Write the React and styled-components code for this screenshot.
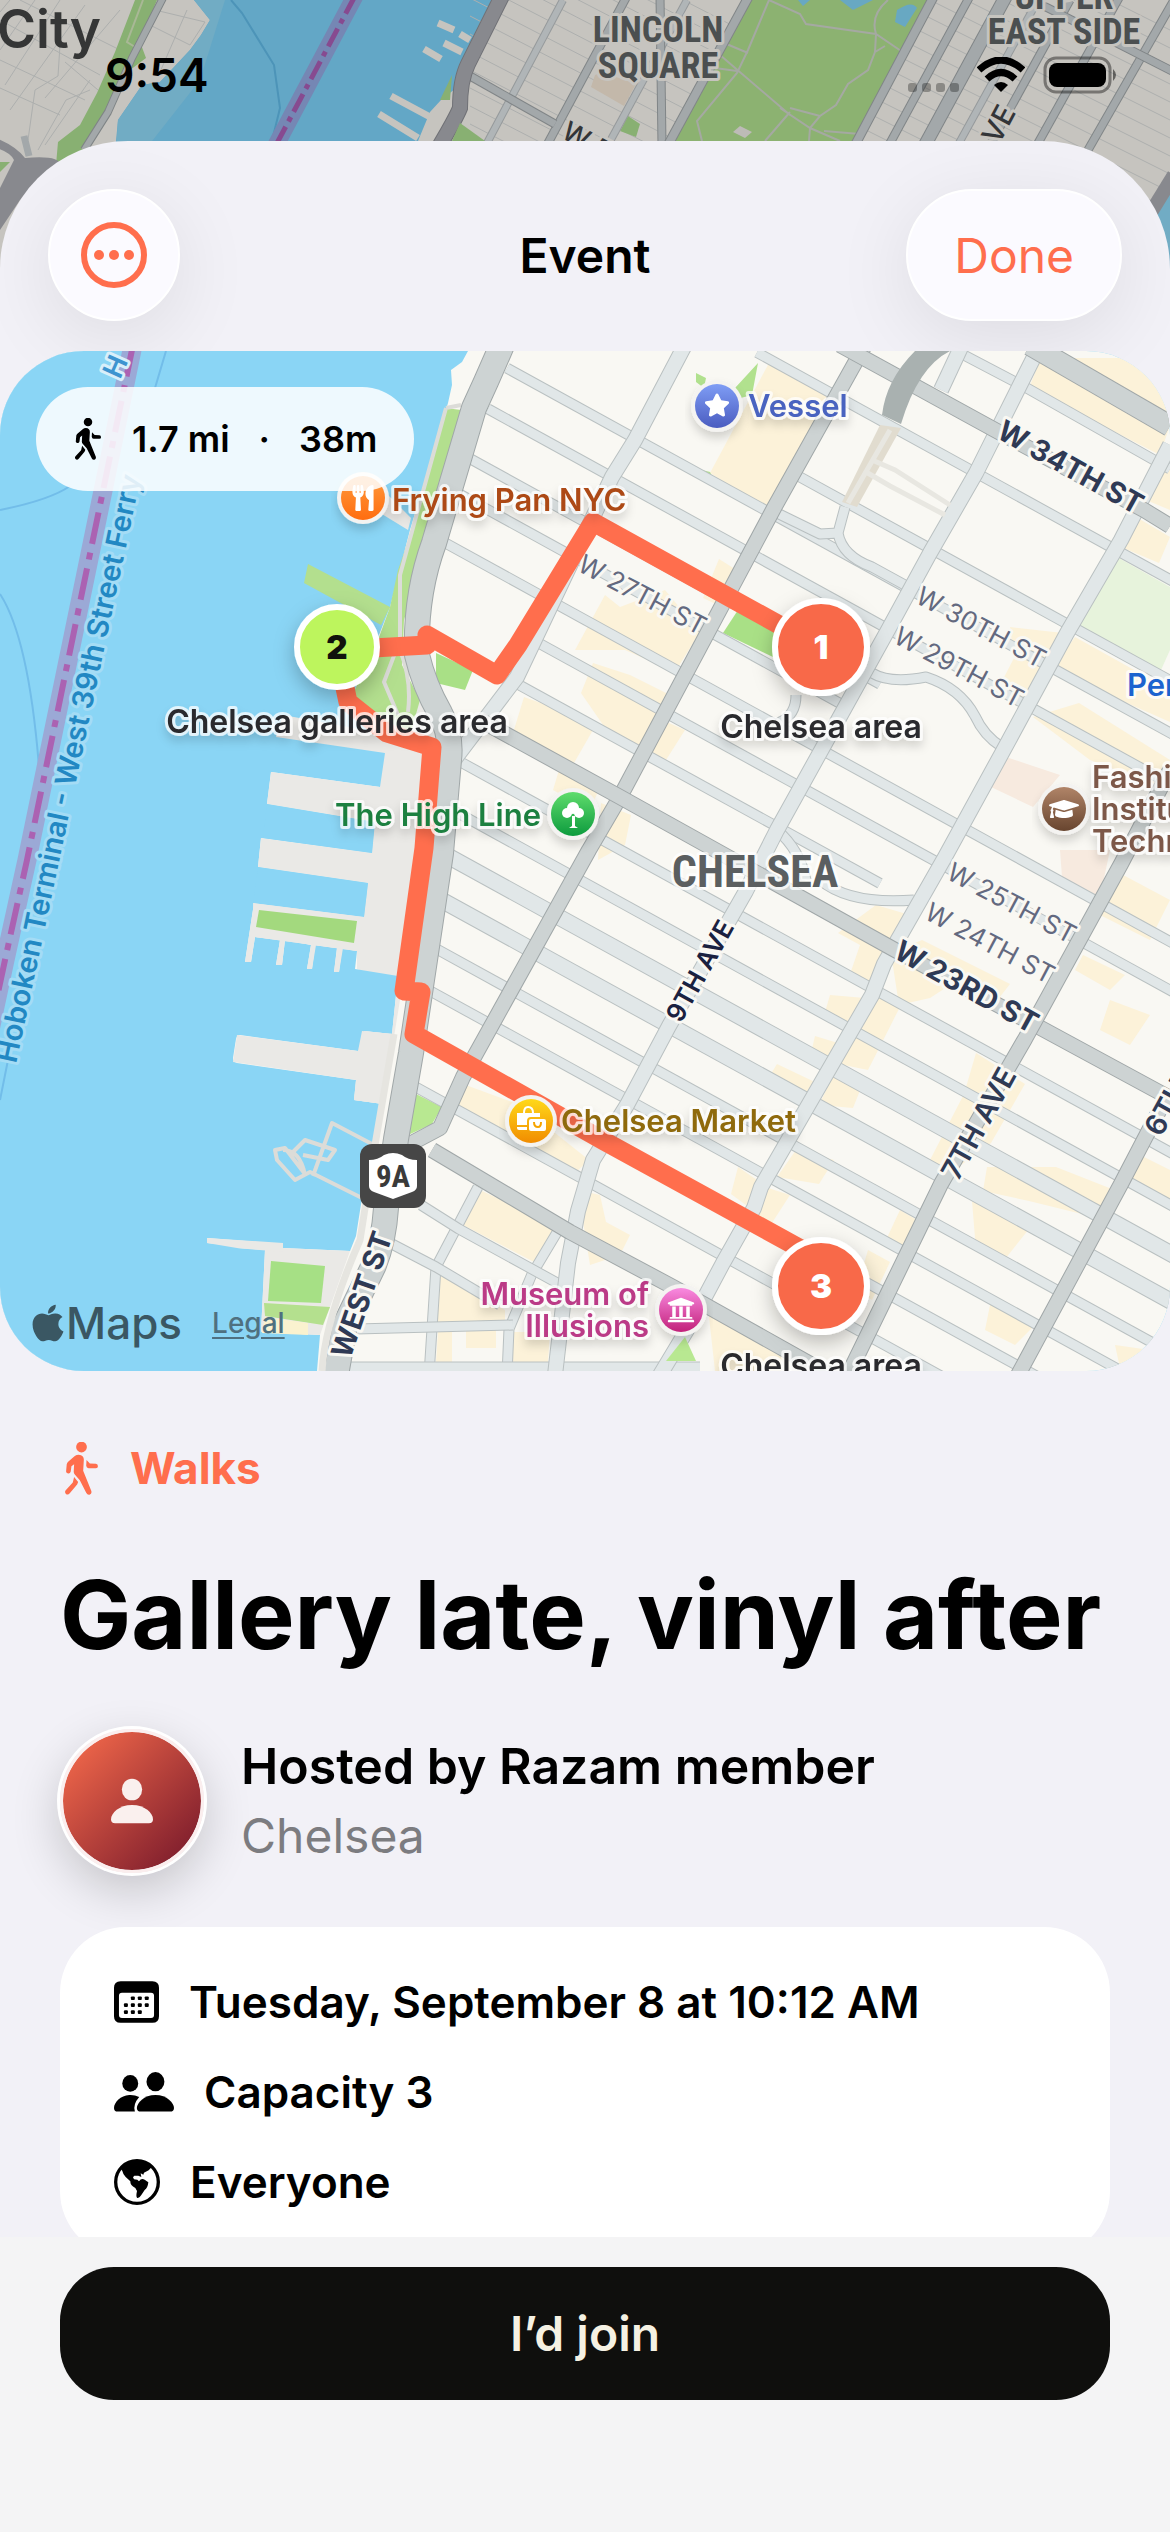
import React from 'react';
import styled, { createGlobalStyle } from 'styled-components';
import { FaApple, FaGraduationCap, FaStar, FaUniversity, FaUtensils } from 'react-icons/fa';

const CORAL = '#ff6e4d';

const GlobalStyle = createGlobalStyle`
  * {
    box-sizing: border-box;
  }
  body {
    margin: 0;
    background: #f2f1f7;
    color: #000;
    font-family: Inter, "Liberation Sans", sans-serif;
  }
  h1, h2, p, ul {
    margin: 0;
    padding: 0;
  }
  button {
    font-family: inherit;
    border: none;
    cursor: pointer;
  }
`;

const Screen = styled.div`
  position: relative;
  display: flex;
  flex-direction: column;
  height: 100vh;
  overflow: hidden;
`;

const Backdrop = styled.svg`
  position: absolute;
  top: 0;
  left: 0;
  width: 100%;
  height: 300px;
`;

const StatusBar = styled.div`
  position: relative;
  flex: none;
  display: flex;
  justify-content: space-between;
  align-items: center;
  height: 141px;
  padding: 8px 52px 0 105px;
`;

const Clock = styled.span`
  font-size: 46px;
  font-weight: 600;
`;

const StatusIcons = styled.div`
  display: flex;
  align-items: center;
  gap: 18px;
`;

const Sheet = styled.main`
  position: relative;
  flex: 1;
  min-height: 0;
  display: flex;
  flex-direction: column;
  border-radius: 128px 128px 0 0;
  background: #f2f1f7;
  overflow: hidden;
`;

const Header = styled.header`
  flex: none;
  display: grid;
  grid-template-columns: 1fr auto 1fr;
  align-items: center;
  padding: 48px 48px 30px;
`;

const HeaderTitle = styled.h2`
  font-size: 48px;
  font-weight: 600;
`;

const GlassButton = styled.button`
  display: flex;
  align-items: center;
  justify-content: center;
  justify-self: ${(props) => props.$side};
  height: 132px;
  min-width: 132px;
  padding: 0 ${(props) => (props.$side === 'end' ? 46 : 0)}px;
  border-radius: 66px;
  border: 2px solid #fff;
  background: #fbfaff;
  box-shadow: 0 16px 80px rgba(0, 0, 0, 0.09);
  color: ${CORAL};
  font-size: 48px;
`;

const Content = styled.div`
  flex: 1;
  min-height: 0;
  overflow-y: auto;
  scrollbar-width: none;
`;

const MapCard = styled.section`
  position: relative;
  height: 1020px;
  border-radius: 84px;
  overflow: hidden;
  background: #8ad5f5;
`;

const MapCanvas = styled.svg`
  display: block;
  width: 100%;
  height: 100%;
  font-family: Inter, "Liberation Sans", sans-serif;
`;

const Chip = styled.div`
  position: absolute;
  top: 36px;
  left: 36px;
  display: flex;
  align-items: center;
  gap: 29px;
  height: 104px;
  padding: 0 37px;
  border-radius: 52px;
  background: rgba(255, 255, 255, 0.86);
  font-size: 36px;
  font-weight: 600;
`;

const Attribution = styled.div`
  position: absolute;
  left: 32px;
  bottom: 22px;
  display: flex;
  align-items: center;
  color: #3a5763;
  font-size: 44px;
  font-weight: 500;
  line-height: 52px;

  svg {
    width: 32px;
    height: 42px;
    margin-right: 2px;
  }

  a {
    margin-left: 30px;
    color: #4f7080;
    font-size: 28px;
    text-underline-offset: 4px;
  }
`;

const Details = styled.section`
  display: flex;
  flex-direction: column;
  padding: 67px 60px 90px;
`;

const Category = styled.div`
  display: flex;
  align-items: center;
  gap: 32px;
  height: 60px;
  padding-left: 5px;
  color: ${CORAL};
  font-size: 44px;
  font-weight: 700;
`;

const Title = styled.h1`
  margin-top: 57px;
  font-size: 95px;
  font-weight: 700;
  line-height: 120px;
  white-space: nowrap;
`;

const Host = styled.div`
  display: flex;
  align-items: center;
  gap: 37px;
  margin-top: 54px;
  padding-right: 60px;
`;

const Avatar = styled.div`
  flex: none;
  display: flex;
  align-items: center;
  justify-content: center;
  width: 144px;
  height: 144px;
  border: 3px solid #fbeeee;
  border-radius: 50%;
  background: linear-gradient(135deg, #f0674a 8%, #7c1c2c 92%) padding-box;
  box-shadow: 0 0 0 3px #fff, 0 16px 50px rgba(0, 0, 0, 0.2);
`;

const HostName = styled.p`
  font-size: 50px;
  font-weight: 600;
  line-height: 70px;
`;

const HostArea = styled.p`
  color: #7c7c80;
  font-size: 48px;
  line-height: 70px;
`;

const InfoCard = styled.ul`
  margin-top: 54px;
  padding: 30px 54px;
  border-radius: 66px;
  background: #fff;
  list-style: none;
`;

const InfoRow = styled.li`
  display: flex;
  align-items: center;
  gap: 30px;
  height: 90px;
  font-size: 44px;
  font-weight: 600;
`;

const Footer = styled.footer`
  flex: none;
  height: 295px;
  padding: 30px 60px;
  background: #f4f4f5;
`;

const JoinButton = styled.button`
  width: 100%;
  height: 133px;
  border-radius: 54px;
  background: #0f0f0d;
  color: #f5f1e3;
  font-size: 48px;
  font-weight: 600;
`;

const MapText = styled.text`
  fill: ${(props) => props.$color || '#2b2b2d'};
  font-size: ${(props) => props.$size || 31}px;
  font-weight: ${(props) => props.$weight || 600};
  font-family: ${(props) => (props.$narrow ? '"Liberation Sans Narrow", "Roboto Condensed", "Liberation Sans", sans-serif' : 'inherit')};
  text-anchor: ${(props) => props.$anchor || 'start'};
  paint-order: stroke;
  stroke: ${(props) => props.$halo || 'rgba(255, 255, 255, 0.75)'};
  stroke-width: 6px;
  stroke-linejoin: round;
`;

// [x, y] where each cross street meets 10th Ave, and how far west it starts
const STREETS = [
  [838, 397, 757],
  [800, 477, 800],
  [774, 515, 507],
  [750, 553, 488],
  [727, 600, 470, 880],
  [712, 633, 455, 850],
  [689, 677, 444],
  [666, 713, 530],
  [643, 753, 510, 880],
  [597, 837, 462],
  [578, 879, 450],
  [555, 915, 446, 1175, 15],
  [536, 952, 440, 1175, 15],
  [513, 991, 433],
  [494, 1026, 428],
  [471, 1065, 418],
  [452, 1107, 412],
];

const SLOPE = 0.55;

const LIGHT_ROADS = [
  'M685 345L635 440L612 477L517 677L454 760',
  'M1040 345L976 473L930 553L888 630L777 830L746 891L669 1026L627 1105L593 1160L578 1211L568 1263L555 1375',
  'M1170 445L1121 540L1067 633L1002 753L945 857L884 964L872 995L761 1187L754 1208L723 1263L690 1325L660 1375',
  'M962 345L941 390',
];

const THIN_ROADS = [
  'M960 353L1025 387L1170 469',
  'M478 1187L436 1267L429 1375',
  'M559 1229L532 1274L509 1329L507 1375',
  'M421 1205L459 1229L570 1290',
  'M390 1243L436 1267L500 1305',
  'M356 1329L513 1325',
  'M345 1367L700 1367',
  'M845 507L838 533L820 534L777 513M838 533Q842 556 872 567L914 590',
  'M872 673Q890 684 926 677Q960 688 975 716Q984 736 1002 747',
  'M777 830Q800 850 806 880M820 880Q850 905 914 900',
  'M796 695Q796 715 780 722L773 738',
];

const MAJOR_ROADS = [
  'M865 345L774 508L620 797L589 850L463 1077L440 1128L408 1145',
  'M480 720L620 797L895 950L1037 1026L1170 1098',
  'M432 1150L570 1232L673 1287L830 1375',
  'M1170 770L1121 864L1025 1039L941 1184L848 1375',
  'M1170 1090L1121 1184L1018 1375',
  'M840 345L995 430L1144 510L1170 526',
];

const WEST_ST = 'M502 345Q488 378 474 408L434 543Q415 595 417 655Q424 685 440 713Q452 735 449 760L441 853L411 1053L396 1139L386 1208Q384 1240 374 1265L345 1325L336 1375';

const BUILDINGS = [
  '769,363 834,397 769,510 710,473',
  '1029,388 1041,358 1160,358 1170,425 1160,455',
  '1160,470 1170,470 1170,510 1146,500',
  '1136,517 1170,537 1159,563 1121,547',
  '1010,627 1063,633 1022,707 999,687 1014,658',
  '1075,637 1170,690 1170,722 1052,670',
  '1033,717 1079,703 1170,760 1170,790 1090,760',
  '575,650 605,595 620,607 665,590 700,632 675,672 625,650',
  '719,559 738,571 720,606 703,598',
  '581,693 593,663 630,675 670,695 640,750 610,735',
  '524,697 597,723 574,763 513,733',
  '559,770 600,787 590,810 553,790',
  '662,720 685,730 666,760 645,750',
  '601,803 631,815 625,845 598,860',
  '876,905 910,915 888,947 876,988 849,977 860,945 838,933',
  '891,953 922,940 1010,984 999,998 950,985 930,998 899,1005',
  '830,995 865,998 845,1029 823,1019',
  '815,1036 838,1043 830,1060 811,1053',
  '777,1064 819,1084 807,1101 769,1077',
  '880,995 903,1001 868,1070 834,1063',
  '834,1074 861,1088 853,1108 819,1105',
  '796,1150 834,1160 819,1184 777,1177',
  '738,1167 757,1180 750,1208 731,1194',
  '765,1187 790,1195 770,1226 752,1218',
  '976,1053 1025,1084 991,1143 945,1177 930,1160 964,1094',
  '987,1167 1056,1167 1117,1191 1098,1218 1029,1201 983,1191',
  '972,1201 1029,1229 1002,1263 976,1250',
  '1110,868 1170,900 1150,940 1100,915',
  '1083,955 1125,975 1110,990 1075,970',
  '1110,1000 1150,1015 1130,1045 1100,1030',
  '1136,1153 1170,1170 1170,1200 1125,1180',
  '991,1300 1035,1325 1015,1345 985,1330',
  '1115,1345 1150,1350 1120,1368',
  '900,1210 920,1222 900,1255 886,1240',
  '868,1250 890,1262 872,1300 856,1290',
  '708,1308 790,1355 790,1371 715,1371',
  '578,1190 600,1195 606,1222 630,1235 620,1255 590,1265',
  '463,1084 520,1105 589,1160 574,1174 455,1105',
  '482,1191 555,1225 536,1263 463,1225',
  '440,1273 505,1310 505,1322 436,1322',
  '438,1332 452,1332 452,1362 436,1362',
  '466,1330 496,1330 496,1348 466,1348',
  '513,1332 550,1332 548,1362 513,1362',
];

const WATER = 'M0 351H468L462 362L451 370L452 385L448 403L410 530L390 607L377 640L350 700L385 753L380 787L271 772L267 804L375 822L372 853L261 838L258 867L368 883L364 917L254 903L245 962H251L255 937L280 940L276 965H282L285 940L311 945L307 969H312L315 945L337 948L334 972H339L342 948L357 951L355 969L398 976L392 1034L364 1031L362 1047L358 1051L240 1035Q237 1035 236 1039L233 1058Q233 1062 237 1063L356 1080L354 1100L383 1104L375 1143L362 1198L356 1236L350 1251L283 1248V1244L207 1238V1243L237 1246V1248L265 1250L261 1332L320 1335L317 1371H0Z';

const ROUTE = 'M821 648L593 522L518 645L497 675L427 635V645L337 650L348 702L387 733L432 747L424 848L404 991L421 992L414 1034L604 1141L821 1260';

const POI_COLORS = {
  food: ['#ff9a3c', '#ff6d10'],
  sight: ['#7f9df5', '#4a5cc0'],
  park: ['#5fdc6c', '#0d9b3e'],
  shop: ['#ffd91a', '#f18c00'],
  museum: ['#f98ae0', '#c2217a'],
  school: ['#b08468', '#68452f'],
};

const POIS = [
  { kind: 'food', x: 363, y: 498, tx: 392, ty: 511, lines: ['Frying Pan NYC'], color: '#ad4a13' },
  { kind: 'sight', x: 717, y: 406, tx: 748, ty: 417, lines: ['Vessel'], color: '#4a63c0' },
  { kind: 'park', x: 573, y: 814, tx: 541, ty: 826, anchor: 'end', lines: ['The High Line'], color: '#1d8040' },
  { kind: 'shop', x: 531, y: 1121, tx: 561, ty: 1132, lines: ['Chelsea Market'], color: '#8f6a0c' },
  { kind: 'museum', x: 681, y: 1310, tx: 649, ty: 1305, anchor: 'end', lines: ['Museum of', 'Illusions'], color: '#bb3a87' },
  { kind: 'school', x: 1064, y: 809, tx: 1092, ty: 788, lines: ['Fashion', 'Institute of', 'Technology'], color: '#7d5949' },
];

const STREET_LABELS = [
  { text: 'W 34TH ST', x: 995, y: 437, angle: 29, size: 29, weight: 700, color: '#2f3a55' },
  { text: 'W 23RD ST', x: 892, y: 957, angle: 29, size: 29, weight: 700, color: '#2f3a55' },
  { text: 'W 27TH ST', x: 576, y: 570, angle: 28, size: 26, weight: 400, color: '#63697f' },
  { text: 'W 30TH ST', x: 914, y: 602, angle: 28, size: 26, weight: 400, color: '#63697f' },
  { text: 'W 29TH ST', x: 892, y: 642, angle: 28, size: 26, weight: 400, color: '#63697f' },
  { text: 'W 25TH ST', x: 945, y: 878, angle: 28, size: 26, weight: 400, color: '#63697f' },
  { text: 'W 24TH ST', x: 923, y: 918, angle: 28, size: 26, weight: 400, color: '#63697f' },
  { text: '9TH AVE', x: 681, y: 1024, angle: -61, size: 26, weight: 600, color: '#1a2140' },
  { text: '7TH AVE', x: 958, y: 1182, angle: -61, size: 29, weight: 600, color: '#2f3a55' },
  { text: '6TH AVE', x: 1161, y: 1138, angle: -61, size: 29, weight: 600, color: '#2f3a55' },
  { text: 'WEST ST', x: 350, y: 1360, angle: -71, size: 29, weight: 700, color: '#2f3a55' },
];

const STOPS = [
  { n: 1, x: 821, y: 647, r: 46, label: 'Chelsea area', ly: 738, fill: '#f8694a', ink: '#fff' },
  { n: 2, x: 337, y: 647, r: 40, label: 'Chelsea galleries area', ly: 733, fill: '#bdf55d', ink: '#11130c' },
  { n: 3, x: 821, y: 1286, r: 46, label: 'Chelsea area', ly: 1377, fill: '#f8694a', ink: '#fff' },
];

const WalkIcon = ({ width, height }) => (
  <svg width={width} height={height} viewBox="0 0 98 158" fill="currentColor" aria-hidden="true">
    <circle cx="49" cy="15" r="16" />
    <path d="M3 88L5 66Q6 61 10 58L29 42Q34 38 41 38Q56 39 56 53L54 86L78 145Q81 154 73 157Q67 159 63 151L44 114L29 97Q25 92 26 86L27 66L19 72L17 88Q15 95 9 94Q3 93 3 88Z" />
    <path d="M27 104L39 119L36 127L14 153Q8 160 2 154Q-2 149 2 144L23 121Z" />
    <path d="M64 54L74 64L92 65Q98 66 98 72Q98 78 92 78L70 78Q64 78 63 71Z" />
  </svg>
);

const WifiIcon = () => (
  <svg width="48" height="36" viewBox="0 0 48 36" aria-hidden="true">
    <path d="M24 35L17 28Q24 22 31 28Z" fill="#000" />
    <path d="M10 22Q24 9 38 22" fill="none" stroke="#000" strokeWidth="7" />
    <path d="M2 13Q24 -7 46 13" fill="none" stroke="#000" strokeWidth="7" />
  </svg>
);

const BatteryIcon = () => (
  <svg width="75" height="38" viewBox="0 0 75 38" aria-hidden="true">
    <rect x="2" y="2" width="65" height="34" rx="11" fill="none" stroke="#000" strokeOpacity="0.4" strokeWidth="3" />
    <rect x="6" y="7" width="57" height="24" rx="8" />
    <path d="M70 13Q76 19 70 25Z" fillOpacity="0.5" />
  </svg>
);

const SignalDots = () => (
  <svg width="52" height="38" viewBox="0 0 52 38" aria-hidden="true">
    {[1, 15, 29, 43].map((x) => (
      <rect key={x} x={x} y="27" width="9" height="9" rx="3" fill="#000" fillOpacity="0.3" />
    ))}
  </svg>
);

const MoreIcon = () => (
  <svg width="66" height="66" viewBox="0 0 66 66" fill={CORAL} aria-hidden="true">
    <circle cx="33" cy="33" r="30" fill="none" stroke={CORAL} strokeWidth="6" />
    <circle cx="18" cy="33" r="5" />
    <circle cx="33" cy="33" r="5" />
    <circle cx="48" cy="33" r="5" />
  </svg>
);

const PersonIcon = () => (
  <svg width="42" height="46" viewBox="0 0 124 132" fill="#faf0ee" aria-hidden="true">
    <ellipse cx="62" cy="32" rx="30" ry="32" />
    <path d="M0 120C0 102 24 78 62 78S124 102 124 120Q124 132 112 132H12Q0 132 0 120Z" />
  </svg>
);

const CalendarIcon = () => (
  <svg width="45" height="42" viewBox="0 0 136 126" aria-hidden="true">
    <path fillRule="evenodd" d="M20 0H116Q136 0 136 20V106Q136 126 116 126H20Q0 126 0 106V20Q0 0 20 0ZM24 35Q15 35 15 44V102Q15 111 24 111H112Q121 111 121 102V44Q121 35 112 35Z" />
    {[[57, 51], [78, 51], [99, 51], [36, 72], [57, 72], [78, 72], [99, 72], [36, 93], [57, 93], [78, 93]].map(([x, y]) => (
      <rect key={`${x}-${y}`} x={x - 6} y={y - 5} width="12" height="11" rx="3" />
    ))}
  </svg>
);

const PeopleIcon = () => (
  <svg width="60" height="40" viewBox="0 0 181 120" aria-hidden="true">
    <ellipse cx="49" cy="34" rx="24" ry="25" />
    <ellipse cx="125" cy="29" rx="27" ry="29" />
    <path d="M76 75Q62 68 46 69C20 70 0 92 0 108Q0 119 11 119H63Q56 98 76 75Z" />
    <path d="M69 108C69 94 90 69 125 69S181 94 181 108Q181 119 169 119H81Q69 119 69 108Z" />
  </svg>
);

const GlobeIcon = () => (
  <svg width="46" height="46" viewBox="0 0 138 138" aria-hidden="true">
    <circle cx="69" cy="69" r="64" fill="none" stroke="#000" strokeWidth="10" />
    <path d="M20 28Q42 4 69 4Q96 4 114 23L104 34L90 41L88 47L80 43L82 54L73 50L61 50L57 55L60 61L70 62L75 67Q82 56 92 62L103 70Q101 88 92 93L82 108Q75 119 70 117Q65 114 69 96L64 87Q48 79 49 67L35 54Q27 46 25 36Z" />
  </svg>
);

const PoiGlyph = ({ kind }) => {
  switch (kind) {
    case 'food':
      return <FaUtensils x="-13" y="-13" size={26} color="#fff" />;
    case 'sight':
      return <FaStar x="-13" y="-14" size={26} color="#fff" />;
    case 'school':
      return <FaGraduationCap x="-15" y="-15" size={30} color="#fff" />;
    case 'museum':
      return <FaUniversity x="-14" y="-14" size={28} color="#fff" />;
    case 'park':
      return (
        <g fill="#fff">
          <circle cx="0" cy="-6" r="6" />
          <circle cx="-6" cy="-1" r="5" />
          <circle cx="6" cy="-1" r="5" />
          <path d="M-1 2H2V12L5 14H-4L-1 12Z" />
        </g>
      );
    default:
      return (
        <g fill="#fff">
          <path d="M-14 -8H9V-4H0Q-4 -4 -4 0V4H-14Z" />
          <path d="M-14 6H-4V9H-12Q-14 9 -14 7Z" />
          <path d="M-7 -8Q-7 -14 -3 -14Q2 -14 2 -8" fill="none" stroke="#fff" strokeWidth="2" />
          <rect x="-2" y="-2" width="17" height="12" rx="2" />
          <path d="M3 1Q3 6 7 6Q10 6 10 1" fill="none" stroke="#f7a400" strokeWidth="2" />
        </g>
      );
  }
};

const Road = ({ d, width, fill = '#e1e7e8', edge = '#b9c0c1' }) => (
  <>
    <path d={d} stroke={edge} strokeWidth={width + 2} fill="none" strokeLinejoin="round" />
    <path d={d} stroke={fill} strokeWidth={width} fill="none" strokeLinejoin="round" />
  </>
);

const streetPath = ([x, y, from, to = 1175]) => (
  `M${from} ${y + (from - x) * SLOPE}L${to} ${y + (to - x) * SLOPE}`
);

const RouteMap = () => (
  <MapCanvas viewBox="0 351 1170 1020" preserveAspectRatio="xMidYMid slice" role="img" aria-label="Walking route through Chelsea">
    <defs>
      {Object.entries(POI_COLORS).map(([kind, [top, bottom]]) => (
        <linearGradient key={kind} id={`poi-${kind}`} x1="0" y1="0" x2="0" y2="1">
          <stop offset="0" stopColor={top} />
          <stop offset="1" stopColor={bottom} />
        </linearGradient>
      ))}
      <filter id="soft" x="-50%" y="-50%" width="200%" height="200%">
        <feDropShadow dx="0" dy="8" stdDeviation="10" floodOpacity="0.25" />
      </filter>
      <filter id="label" x="-10%" y="-30%" width="120%" height="200%">
        <feDropShadow dx="0" dy="6" stdDeviation="5" floodOpacity="0.16" />
      </filter>
    </defs>

    <rect y="351" width="1170" height="1020" fill="#f9f8f3" />
    <g fill="#fcf2d9">
      {BUILDINGS.map((points) => <polygon key={points} points={points} />)}
    </g>
    <polygon points="1117,557 1170,587 1170,650 1161,670 1077,630" fill="#e7f3dc" />
    <polygon points="1006,757 1060,775 1033,807 991,787" fill="#f7eadf" />
    <polygon points="1060,850 1110,850 1100,897 1062,877" fill="#f7eadf" />
    <polygon points="723,633 738,610 784,627 773,657" fill="#a9e086" />
    <path d="M735 388L758 363L752 395L733 400ZM696 373L706 378L704 388L696 382ZM702 470L710 472L714 480L706 478Z" fill="#b1e18e" />
    <path d="M350 700L372 650L420 690L450 740L432 757L385 753L276 737L280 715Z" fill="#eae9e6" />
    <path d="M385 740L437 750L420 985H398L357 969L357 905L368 883L372 853Z" fill="#eae9e6" />
    <path d={WATER} fill="#8ad5f5" />
    <path d="M276 737L385 753L392 735L283 715Z" fill="#eae9e6" />
    <path d="M398 976L392 1034L364 1031L362 1047L354 1100L383 1104L400 1000Z" fill="#eae9e6" />
    <path d="M258 867L368 883L364 917L254 903L245 962H251L255 937L357 951L398 976L437 750L380 787L271 772L267 804L375 822L372 853L261 838Z" fill="#eae9e6" />
    <path d="M233 1062L237 1035L358 1051L362 1031L392 1034L383 1104L354 1100L356 1080Z" fill="#eae9e6" />
    <path d="M265 1250L283 1248L350 1251L320 1335L261 1332Z" fill="#eae9e6" />
    <path d="M207 1238L283 1243V1252L237 1248L207 1243Z" fill="#eae9e6" />
    <path d="M267 804L375 822L372 853L263 838Z" fill="#8ad5f5" />
    <path d="M258 867L368 883L364 917L253 903Z" fill="#8ad5f5" />
    <path d="M280 940L276 965H282L285 940ZM311 945L307 969H312L316 945ZM337 948L334 972H339L343 948Z" fill="#eae9e6" />
    <path d="M253 903L364 917L357 951L255 937Z" fill="#eae9e6" />
    <polygon points="259,910 357,921 354,943 256,927" fill="#a3d97e" />
    <polygon points="271,1261 325,1266 321,1303 268,1301" fill="#a6e085" />
    <polygon points="264,1303 330,1307 323,1325 265,1316" fill="#b4e08e" />
    <polygon points="265,1317 308,1323 308,1335 262,1333" fill="#faf2cf" />
    <path d="M446 408L461 410L440 500L404 620L402 665L420 700L410 735L385 720L350 700L378 640L390 607L398 570L412 530ZM308 564L390 607L381 625L304 583Z" fill="#b3df8e" />
    <path d="M446 408L400 575L400 640L384 682L398 715M461 405L446 408M400 650Q412 680 408 712" stroke="#dcdcd8" strokeWidth="4" fill="none" />
    <path d="M376 483L411 518L408 530L372 508Z" fill="#eae9e6" />
    <polygon points="436,653 473,670 465,690 436,683" fill="#a9e086" />
    <polygon points="414,1093 442,1107 432,1124 408,1135" fill="#b8e891" />
    <path d="M0 510Q50 500 70 486M0 594Q30 640 40 780M166 351L155 388M0 1100L8 1060" stroke="#72bde9" strokeWidth="2" fill="none" />
    <path d="M372 1144L332 1123L313 1176M362 1198L310 1172L295 1180L277 1160L275 1150L285 1148L305 1174M283 1150Q300 1150 305 1175M290 1155L305 1140L335 1150L328 1160L303 1155" stroke="#dcdcd8" strokeWidth="4" fill="none" strokeLinejoin="round" />

    {STREETS.map((street) => (
      <Road key={street[0]} d={streetPath(street)} width={street[4] || 9} />
    ))}
    {THIN_ROADS.map((d) => <Road key={d} d={d} width={9} />)}
    {LIGHT_ROADS.map((d) => <Road key={d} d={d} width={14} />)}
    {MAJOR_ROADS.map((d) => <Road key={d} d={d} width={14} fill="#cdd3d3" edge="#a0a7a8" />)}
    <Road d="M1030 345L1170 426" width={20} fill="#cdd3d3" edge="#a0a7a8" />
    <Road d={WEST_ST} width={24} fill="#cdd3d3" edge="#a0a7a8" />
    <path d="M394 1034L375 1145L360 1240Q325 1320 322 1371" stroke="#e6e5e0" strokeWidth="7" fill="none" />
    <polygon points="880,425 901,428 857,507 842,502" fill="#e1dccf" />
    <path d="M890 430L848 503M872 460L895 470L950 505M866 472L890 486L945 515" stroke="#e8e7e1" strokeWidth="5" fill="none" />
    <path d="M915 351H950Q918 367 901 424L882 415Q886 380 915 351Z" fill="#a9b1b0" />
    <polygon points="685,1337 696,1361 666,1361" fill="#b8e891" />

    <path d="M133 345L27 860L5 960L-10 1030" stroke="#9ba9d6" strokeWidth="19" fill="none" />
    <path d="M133 345L27 860L5 960L-10 1030" stroke="#ab62b2" strokeWidth="6" fill="none" strokeDasharray="32 9 7 9" />
    <MapText transform="translate(16 1064) rotate(-78)" $size={29} $color="#2288c3" $halo="#a4dcf5">
      Hoboken Terminal - West 39th Street Ferry
    </MapText>
    <MapText transform="translate(120 380) rotate(-66)" $size={28} $color="#3d94d0" $halo="#d8effa">H</MapText>

    {STREET_LABELS.map(({ text, x, y, angle, size, weight, color }) => (
      <MapText key={text} transform={`translate(${x} ${y}) rotate(${angle})`} $size={size} $weight={weight} $color={color} $halo="#f9f8f3">
        {text}
      </MapText>
    ))}

    <path d={ROUTE} stroke={CORAL} strokeWidth="19" strokeLinejoin="round" fill="none" />

    <MapText x="755" y="887" $size={44} $weight={700} $anchor="middle" $color="#5b5f61" $narrow>CHELSEA</MapText>
    <MapText x="1127" y="696" $color="#1c63cf">Penn</MapText>

    {POIS.map(({ kind, x, y, tx, ty, anchor, lines, color }) => (
      <g key={kind}>
        <g filter="url(#label)">
          <circle cx={x} cy={y} r="26" fill="#f4f3f1" />
        </g>
        <circle cx={x} cy={y} r="22" fill={`url(#poi-${kind})`} />
        <g transform={`translate(${x} ${y})`}><PoiGlyph kind={kind} /></g>
        <g filter="url(#label)">
          {lines.map((line, i) => (
            <MapText key={line} x={tx} y={ty + i * 32} $anchor={anchor} $color={color}>{line}</MapText>
          ))}
        </g>
      </g>
    ))}

    <rect x="360" y="1144" width="66" height="64" rx="12" fill="#464646" />
    <path d="M369 1160Q378 1160 384 1155Q393 1151 402 1155Q408 1160 417 1160V1186Q417 1190 412 1192L393 1199L374 1192Q369 1190 369 1186Z" fill="#fff" />
    <MapText x="393" y="1187" $size={31} $weight={700} $anchor="middle" $color="#3a3a3a" $halo="none" $narrow>9A</MapText>

    {STOPS.map(({ n, x, y, r, label, ly, fill, ink }) => (
      <g key={n}>
        <circle cx={x} cy={y} r={r} fill={fill} stroke="#fff" strokeWidth="6" filter="url(#soft)" />
        <MapText x={x} y={y + 12} $size={33} $weight={900} $anchor="middle" $color={ink} $halo="none">{n}</MapText>
        <g filter="url(#label)">
          <MapText x={x} y={ly} $size={32} $anchor="middle">{label}</MapText>
        </g>
      </g>
    ))}
  </MapCanvas>
);

const CityBackdrop = () => (
  <Backdrop viewBox="0 0 1170 300" preserveAspectRatio="xMidYMin slice" aria-hidden="true">
    <rect width="1170" height="300" fill="#c6c4bf" />
    <path d="M10 0L0 12M35 0L0 50M60 0L5 85M85 5L10 110M120 10L45 98M90 80L45 145M0 20L100 75M20 0L120 50M0 60L85 100M0 88L60 115M35 90L58 76L60 45M35 90L28 140M65 62L98 90M38 150L66 100L90 90" stroke="#adafae" strokeWidth="1" fill="none" />
    <path d="M135 0H157L140 42L146 58L130 70L85 150L56 165L58 142L80 125L97 93L115 52Z" fill="#88b072" />
    <path d="M143 0L127 42L140 50" stroke="#a9b896" strokeWidth="2" fill="none" />
    <path d="M194 0L210 20L201 35L190 50L160 82L142 85L118 120L116 141L100 190H440L459 110L463 67L500 0Z" fill="#63a7c6" />
    <path d="M194 0H225L200 80L145 150H116L118 120L142 85L160 82L190 50L201 35L210 20Z" fill="#71acc4" />
    <path d="M155 10L205 22L190 45L150 25M187 10L160 72" stroke="#adafae" strokeWidth="1" fill="none" />
    <Road d="M164 -4L132 58L108 112L84 150" width={6} fill="#a3a8aa" edge="#7f8486" />
    <path d="M231 0L242 13L274 65L280 108L272 141" stroke="#4d94b8" strokeWidth="2" fill="none" />
    <path d="M391 96L432 118M379 114L418 138M438 23L454 30M460 34L470 40M444 43L462 52M424 49L441 59" stroke="#c6c4bf" strokeWidth="7" fill="none" />
    <path d="M355 -4L276 145" stroke="#7587b4" strokeWidth="17" fill="none" />
    <path d="M355 -4L276 145" stroke="#874a90" strokeWidth="5" strokeDasharray="20 6 5 6" fill="none" />
    <path d="M505 0L465 67L460 85L441 100L430 112L418 141H1170V0Z" fill="#c6c4bf" />
    <path d="M452 75L450 100H440Z" fill="#88b072" />
    <g stroke="#adafae" strokeWidth="1">
      {Array.from({ length: 16 }, (_, i) => (
        <path key={i} d={`M470 ${-110 + i * 18}L745 ${32 + i * 18}`} />
      ))}
      {Array.from({ length: 24 }, (_, i) => (
        <path key={i} d={`M850 ${-130 + i * 18}L1170 ${30 + i * 18}`} />
      ))}
    </g>
    <path d="M595 75L602 72L636 84L624 106L591 87Z" fill="#c3b8aa" />
    <path d="M628 116L640 124L636 137L620 131Z" fill="#88b072" />
    {['M563 0L486 145', 'M687 0L608 145', 'M1038 0L958 145'].map((d) => (
      <Road key={d} d={d} width={6} fill="#b0b5b7" edge="#95999b" />
    ))}
    {['M627 -4L547 145', 'M660 -4L662 145', 'M470 76L555 124', 'M970 -4L889 145', 'M1070 0L990 145', 'M1120 -4L1037 145', 'M1174 0L1088 150', 'M1040 4L1174 72'].map((d) => (
      <Road key={d} d={d} width={7} fill="#a3a8aa" edge="#808587" />
    ))}
    <Road d="M1006 -4L925 145" width={12} fill="#a3a8aa" edge="#808587" />
    <path d="M750 0H929L854 145H668Z" fill="#8cb271" />
    <path d="M769 0L748 50L737 73L697 121L702 141M717 40L748 53M720 55L790 115M715 68L737 71M790 112L765 141M769 0L800 14L806 24L876 34L904 53M876 34Q870 15 888 0M876 34L875 52L885 46M875 52L868 70L848 84L836 105L820 116L810 128L809 141M780 108L810 128L840 141M790 108L820 116M824 131L860 134" stroke="#a5a9a2" strokeWidth="2" fill="none" />
    <path d="M897 10Q912 0 917 8L905 27L895 22ZM840 0H873L853 10ZM798 0H810L803 6Z" fill="#68a8c2" />
    <path d="M733 132L740 126L752 132L745 138Z" fill="#bdbbb7" />
    {['M749 -4L668 145', 'M934 -4L855 145'].map((d) => (
      <Road key={d} d={d} width={8} fill="#a3a8aa" edge="#808587" />
    ))}
    <path d="M502 -4L468 64Q460 80 460 108Q456 118 440 145" stroke="#707176" strokeWidth="16" fill="none" />
    <path d="M502 -4L468 64Q460 80 460 108Q456 118 440 145" stroke="#88898e" strokeWidth="14" fill="none" />
    <path d="M460 123L485 141H452Z" fill="#88b072" />
    <path d="M-4 138Q16 146 25 158Q60 155 60 165L20 200L0 230V188L14 160Q10 152 -4 148Z" fill="#88898e" />
    <path d="M24 136L29 156" stroke="#a3a8aa" strokeWidth="7" />
    <path d="M0 162H10L0 172Z" fill="#88b072" />
    <path d="M1170 190L1150 220V300H1170Z" fill="#71acc4" />
    <path d="M1174 175L1145 222" stroke="#88898e" strokeWidth="14" />
    <MapText x="-3" y="48" $size={53} $color="#353636" $halo="none">City</MapText>
    <MapText x="658" y="42" $size={36} $weight={700} $anchor="middle" $color="#4b4f50" $halo="#c6c4bf" $narrow>LINCOLN</MapText>
    <MapText x="658" y="78" $size={36} $weight={700} $anchor="middle" $color="#4b4f50" $halo="#c6c4bf" $narrow>SQUARE</MapText>
    <MapText x="1064" y="9" $size={36} $weight={700} $anchor="middle" $color="#4b4f50" $halo="#c6c4bf" $narrow>UPPER</MapText>
    <MapText x="1064" y="44" $size={36} $weight={700} $anchor="middle" $color="#4b4f50" $halo="#c6c4bf" $narrow>EAST SIDE</MapText>
    <MapText transform="translate(560 137) rotate(29)" $size={27} $weight={500} $color="#333538" $halo="#c6c4bf">W 57TH</MapText>
    <MapText transform="translate(990 162) rotate(-62)" $size={29} $weight={500} $color="#333538" $halo="#c6c4bf">AVE</MapText>
  </Backdrop>
);

const App = () => (
  <Screen>
    <GlobalStyle />
    <CityBackdrop />
    <StatusBar>
      <Clock>9:54</Clock>
      <StatusIcons>
        <SignalDots />
        <WifiIcon />
        <BatteryIcon />
      </StatusIcons>
    </StatusBar>
    <Sheet>
      <Header>
        <GlassButton $side="start" aria-label="More options"><MoreIcon /></GlassButton>
        <HeaderTitle>Event</HeaderTitle>
        <GlassButton $side="end">Done</GlassButton>
      </Header>
      <Content>
        <MapCard>
          <RouteMap />
          <Chip>
            <WalkIcon width={30} height={42} />
            <span>1.7 mi</span>
            <span>·</span>
            <span>38m</span>
          </Chip>
          <Attribution>
            <FaApple />
            <span>Maps</span>
            <a href="#legal">Legal</a>
          </Attribution>
        </MapCard>
        <Details>
          <Category>
            <WalkIcon width={33} height={53} />
            <span>Walks</span>
          </Category>
          <Title>Gallery late, vinyl after</Title>
          <Host>
            <Avatar><PersonIcon /></Avatar>
            <div>
              <HostName>Hosted by Razam member</HostName>
              <HostArea>Chelsea</HostArea>
            </div>
          </Host>
          <InfoCard>
            <InfoRow><CalendarIcon />Tuesday, September 8 at 10:12 AM</InfoRow>
            <InfoRow><PeopleIcon />Capacity 3</InfoRow>
            <InfoRow><GlobeIcon />Everyone</InfoRow>
          </InfoCard>
        </Details>
      </Content>
      <Footer>
        <JoinButton>I’d join</JoinButton>
      </Footer>
    </Sheet>
  </Screen>
);

export default App;
